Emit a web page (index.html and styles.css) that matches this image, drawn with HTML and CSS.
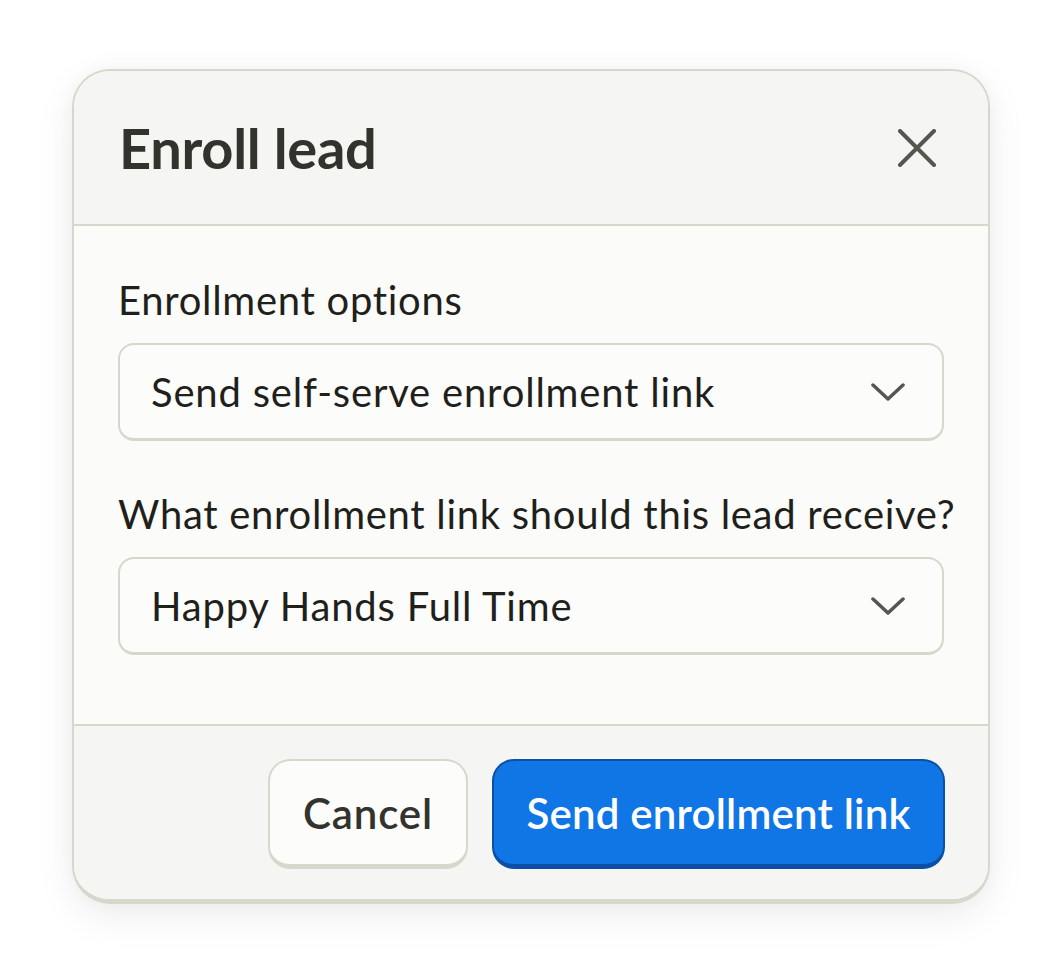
FILE: index.html
```html
<!DOCTYPE html>
<html lang="en">
<head>
<meta charset="utf-8">
<title>Enroll lead</title>
<link rel="stylesheet" href="styles.css">
</head>
<body>
<div class="page">
  <div class="dialog">
    <div class="dialog-header">
      <h1 class="title">Enroll lead</h1>
      <button class="close" aria-label="Close">
        <svg width="38" height="38" viewBox="0 0 38 38"><path d="M2 2 L36 36 M36 2 L2 36" stroke="#565650" stroke-width="4" stroke-linecap="round" fill="none"/></svg>
      </button>
    </div>
    <div class="dialog-body">
      <label class="field-label">Enrollment options</label>
      <div class="select">
        <span class="select-text">Send self-serve enrollment link</span>
        <svg class="chevron" width="34" height="20" viewBox="0 0 34 20"><path d="M2 3 L17 17 L32 3" stroke="#565650" stroke-width="3.5" stroke-linecap="round" stroke-linejoin="round" fill="none"/></svg>
      </div>
      <label class="field-label second">What enrollment link should this lead receive?</label>
      <div class="select">
        <span class="select-text">Happy Hands Full Time</span>
        <svg class="chevron" width="34" height="20" viewBox="0 0 34 20"><path d="M2 3 L17 17 L32 3" stroke="#565650" stroke-width="3.5" stroke-linecap="round" stroke-linejoin="round" fill="none"/></svg>
      </div>
    </div>
    <div class="dialog-footer">
      <button class="btn btn-secondary">Cancel</button>
      <button class="btn btn-primary">Send enrollment link</button>
    </div>
  </div>
</div>
</body>
</html>
```
FILE: styles.css
```css
html, body {
  margin: 0;
  padding: 0;
  background: #ffffff;
}
body {
  font-family: "Lato", "Noto Sans", sans-serif;
  color: #1f1f1c;
}
.page {
  padding: 69px 0 0 72px;
  min-height: 980px;
  box-sizing: border-box;
}
.dialog {
  width: 918px;
  box-sizing: border-box;
  border: 2px solid #d7d7cb;
  border-bottom-width: 5px;
  border-radius: 38px;
  overflow: hidden;
  background: #fbfbf9;
  box-shadow: 0 12px 40px rgba(0, 0, 0, 0.07), 0 0 20px rgba(0,0,0,0.03);
}
.dialog-header {
  height: 153px;
  display: flex;
  align-items: center;
  justify-content: space-between;
  padding: 0 52px 0 45px;
  background: #f5f5f3;
  border-bottom: 2px solid #d7d7cb;
}
.title {
  margin: 0;
  font-size: 56px;
  font-weight: 700;
  color: #33332d;
  letter-spacing: -0.3px;
}
.close {
  border: 0;
  background: transparent;
  padding: 0;
  display: flex;
  cursor: pointer;
}
.dialog-body {
  padding: 49px 44px 69px 44px;
  display: flex;
  flex-direction: column;
}
.field-label {
  font-size: 40px;
  line-height: 50px;
  letter-spacing: 0.7px;
  white-space: nowrap;
  color: #1f1f1c;
}
.field-label.second {
  margin-top: 48px;
}
.select {
  margin-top: 18px;
  height: 98px;
  box-sizing: border-box;
  border: 2px solid #d7d7cb;
  border-bottom-width: 3px;
  border-radius: 16px;
  background: #fcfcfb;
  display: flex;
  align-items: center;
  justify-content: space-between;
  padding: 0 37px 0 31px;
}
.select-text {
  font-size: 40px;
  letter-spacing: 0.8px;
  color: #1f1f1c;
}
.dialog-footer {
  background: #f5f5f3;
  border-top: 2px solid #d7d7cb;
  display: flex;
  justify-content: flex-end;
  gap: 24px;
  padding: 33px 43px 30px 44px;
}
.btn {
  height: 110px;
  box-sizing: border-box;
  border-radius: 22px;
  font-family: "Lato", "Noto Sans", sans-serif;
  font-size: 42px;
  font-weight: 600;
  letter-spacing: 0.5px;
  cursor: pointer;
}
.btn-secondary {
  width: 200px;
  background: #fcfcfa;
  color: #33332d;
  border: 2px solid #d7d7cb;
  border-bottom-width: 5px;
  letter-spacing: 0.9px;
}
.btn-primary {
  width: 453px;
  background: #1076e6;
  color: #ffffff;
  border: 2px solid #0b4fa6;
  border-bottom-width: 5px;
  letter-spacing: 0.2px;
}
```
